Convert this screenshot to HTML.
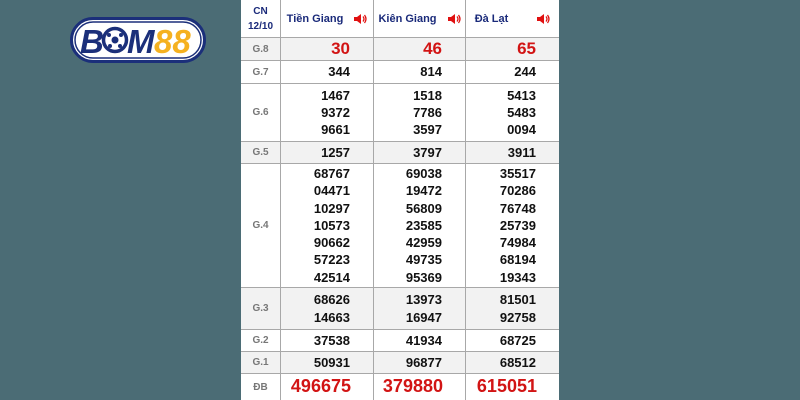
<!DOCTYPE html>
<html><head><meta charset="utf-8"><style>
*{margin:0;padding:0;box-sizing:border-box}
body{width:800px;height:400px;background:#4b6c75;position:relative;overflow:hidden;font-family:"Liberation Sans",Arial,sans-serif}
#t{position:absolute;left:241px;top:0;width:318px;height:400px;background:#fff}
.r{position:absolute;left:0;width:318px;border-bottom:1px solid #a8a8a8}
.g{background:#f2f2f2}
.c{position:absolute;top:0;bottom:0;border-right:1px solid #a8a8a8}
.l{left:0;width:40px;color:#777;font-size:10px;font-weight:bold;display:flex;align-items:center;justify-content:center}
.n{font-weight:bold;font-size:13px;color:#111;text-align:right;padding-right:23px;display:flex;flex-direction:column;justify-content:center;line-height:17.2px}
.c1{left:40px;width:93px}.c2{left:133px;width:92px}.c3{left:225px;width:93px;border-right:none}
.red{color:#d21414;font-size:17px}
.db{color:#d21414;font-size:18px;padding-right:22px}
.h{color:#1a2a7a;font-weight:bold;font-size:11px;display:flex;align-items:center;justify-content:center}
.sp{margin-left:10px;display:inline-block;width:14px;height:14px}
</style></head><body>
<svg style="position:absolute;left:70px;top:17px" width="136" height="46" viewBox="0 0 136 46">
<rect x="1.5" y="1.5" width="133" height="43" rx="21.5" fill="#fff" stroke="#1b2f7a" stroke-width="3"/>
<rect x="5" y="5" width="126" height="36" rx="18" fill="none" stroke="#1b2f7a" stroke-width="1.5"/>
<text x="10" y="36" font-family="Liberation Sans" font-weight="bold" font-style="italic" font-size="33" fill="#1b2f7a">B</text>
<circle cx="45" cy="23" r="11.5" fill="#fff" stroke="#1b2f7a" stroke-width="3.5"/>
<circle cx="45" cy="23" r="3.5" fill="#1b2f7a"/><circle cx="39" cy="18" r="2" fill="#1b2f7a"/><circle cx="51" cy="18" r="2" fill="#1b2f7a"/><circle cx="40" cy="29" r="2" fill="#1b2f7a"/><circle cx="50" cy="29" r="2" fill="#1b2f7a"/>
<text x="57" y="36" font-family="Liberation Sans" font-weight="bold" font-style="italic" font-size="33" fill="#1b2f7a">M</text>
<text x="84" y="36" font-family="Liberation Sans" font-weight="bold" font-style="italic" font-size="33" fill="#f5b120">88</text>
</svg>
<div id="t">
<div class="r" style="top:0;height:38px">
<div class="c l" style="color:#1a2a7a;font-size:10px;text-align:center;line-height:15px;flex-direction:column">CN<br>12/10</div>
<div class="c c1 h">Tiền Giang<svg class="sp" viewBox="0 0 14 14"><path d="M1 5h3l4-3v10l-4-3H1z" fill="#e01010"/><path d="M10 4.5q2 2.5 0 5M11.5 3q3 4 0 8" stroke="#e01010" stroke-width="1.3" fill="none"/></svg></div>
<div class="c c2 h">Kiên Giang<svg class="sp" viewBox="0 0 14 14"><path d="M1 5h3l4-3v10l-4-3H1z" fill="#e01010"/><path d="M10 4.5q2 2.5 0 5M11.5 3q3 4 0 8" stroke="#e01010" stroke-width="1.3" fill="none"/></svg></div>
<div class="c c3 h">Đà Lạt<svg class="sp" style="margin-left:28px" viewBox="0 0 14 14"><path d="M1 5h3l4-3v10l-4-3H1z" fill="#e01010"/><path d="M10 4.5q2 2.5 0 5M11.5 3q3 4 0 8" stroke="#e01010" stroke-width="1.3" fill="none"/></svg></div></div>
<div class="r g" style="top:38px;height:23px"><div class="c l">G.8</div><div class="c c1 n red">30</div><div class="c c2 n red">46</div><div class="c c3 n red">65</div></div>
<div class="r" style="top:61px;height:23px"><div class="c l">G.7</div><div class="c c1 n">344</div><div class="c c2 n">814</div><div class="c c3 n">244</div></div>
<div class="r" style="top:84px;height:58px"><div class="c l">G.6</div><div class="c c1 n">1467<br>9372<br>9661</div><div class="c c2 n">1518<br>7786<br>3597</div><div class="c c3 n">5413<br>5483<br>0094</div></div>
<div class="r g" style="top:142px;height:22px"><div class="c l">G.5</div><div class="c c1 n">1257</div><div class="c c2 n">3797</div><div class="c c3 n">3911</div></div>
<div class="r" style="top:164px;height:124px"><div class="c l">G.4</div><div class="c c1 n">68767<br>04471<br>10297<br>10573<br>90662<br>57223<br>42514</div><div class="c c2 n">69038<br>19472<br>56809<br>23585<br>42959<br>49735<br>95369</div><div class="c c3 n">35517<br>70286<br>76748<br>25739<br>74984<br>68194<br>19343</div></div>
<div class="r g" style="top:288px;height:42px"><div class="c l">G.3</div><div class="c c1 n">68626<br>14663</div><div class="c c2 n">13973<br>16947</div><div class="c c3 n">81501<br>92758</div></div>
<div class="r" style="top:330px;height:22px"><div class="c l">G.2</div><div class="c c1 n">37538</div><div class="c c2 n">41934</div><div class="c c3 n">68725</div></div>
<div class="r g" style="top:352px;height:22px"><div class="c l">G.1</div><div class="c c1 n">50931</div><div class="c c2 n">96877</div><div class="c c3 n">68512</div></div>
<div class="r" style="top:374px;height:26px;border-bottom:none"><div class="c l">ĐB</div><div class="c c1 n db">496675</div><div class="c c2 n db">379880</div><div class="c c3 n db">615051</div></div>
</div>
</body></html>
